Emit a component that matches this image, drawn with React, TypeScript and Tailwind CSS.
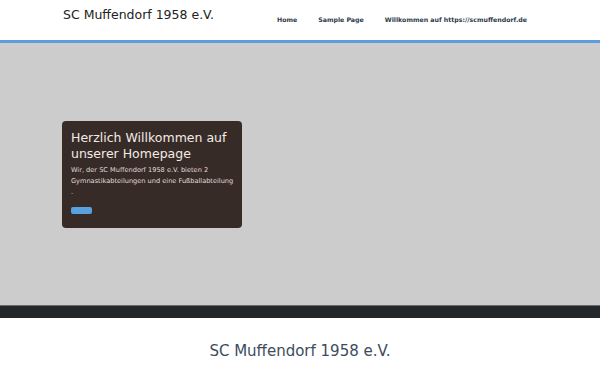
const NAV = ["Home", "Sample Page", "Willkommen auf https://scmuffendorf.de"];

export default function App() {
  return (
    <div
      className="min-h-[375px] bg-white"
      style={{ fontFamily: "'DejaVu Sans', Verdana, sans-serif" }}
    >
      <header className="h-[40px] border-b-[3px] border-[#5a9fdc] bg-white box-content">
        <div className="flex h-full items-center pl-[63px] pr-[73px]">
          <div className="text-[12.5px] text-[#222] leading-none -mt-[9px]">
            SC Muffendorf 1958 e.V.
          </div>
          <nav className="ml-auto flex gap-[21px]">
            {NAV.map((n) => (
              <a
                key={n}
                className="text-[6.25px] font-bold text-[#2d3a4a] leading-none"
              >
                {n}
              </a>
            ))}
          </nav>
        </div>
      </header>

      <section className="h-[262px] bg-[#cccccc] pl-[62px] pt-[78px]">
        <div className="w-[180px] h-[107px] rounded-[4px] bg-[#372b28] pl-[9px] pr-[5px] pt-[9px]">
          <h1 className="text-[12.5px] leading-[16px] text-[#f3ece6]">
            Herzlich Willkommen auf unserer Homepage
          </h1>
          <p className="mt-[3px] text-[6.6px] leading-[11px] text-[#e4dcd6]">
            Wir, der SC Muffendorf 1958 e.V. bieten 2 Gymnastikabteilungen und eine
            Fußballabteilung .
          </p>
          <div className="mt-[9px] w-[21px] h-[7px] rounded-[2px] bg-[#5aa0dc]" />
        </div>
      </section>

      <div className="h-[13px] border-t border-[#6a6a6a] bg-[#24282b]" />

      <footer className="flex justify-center pt-[26px]">
        <div className="text-[15px] text-[#3d4b5c] leading-none">
          SC Muffendorf 1958 e.V.
        </div>
      </footer>
    </div>
  );
}
